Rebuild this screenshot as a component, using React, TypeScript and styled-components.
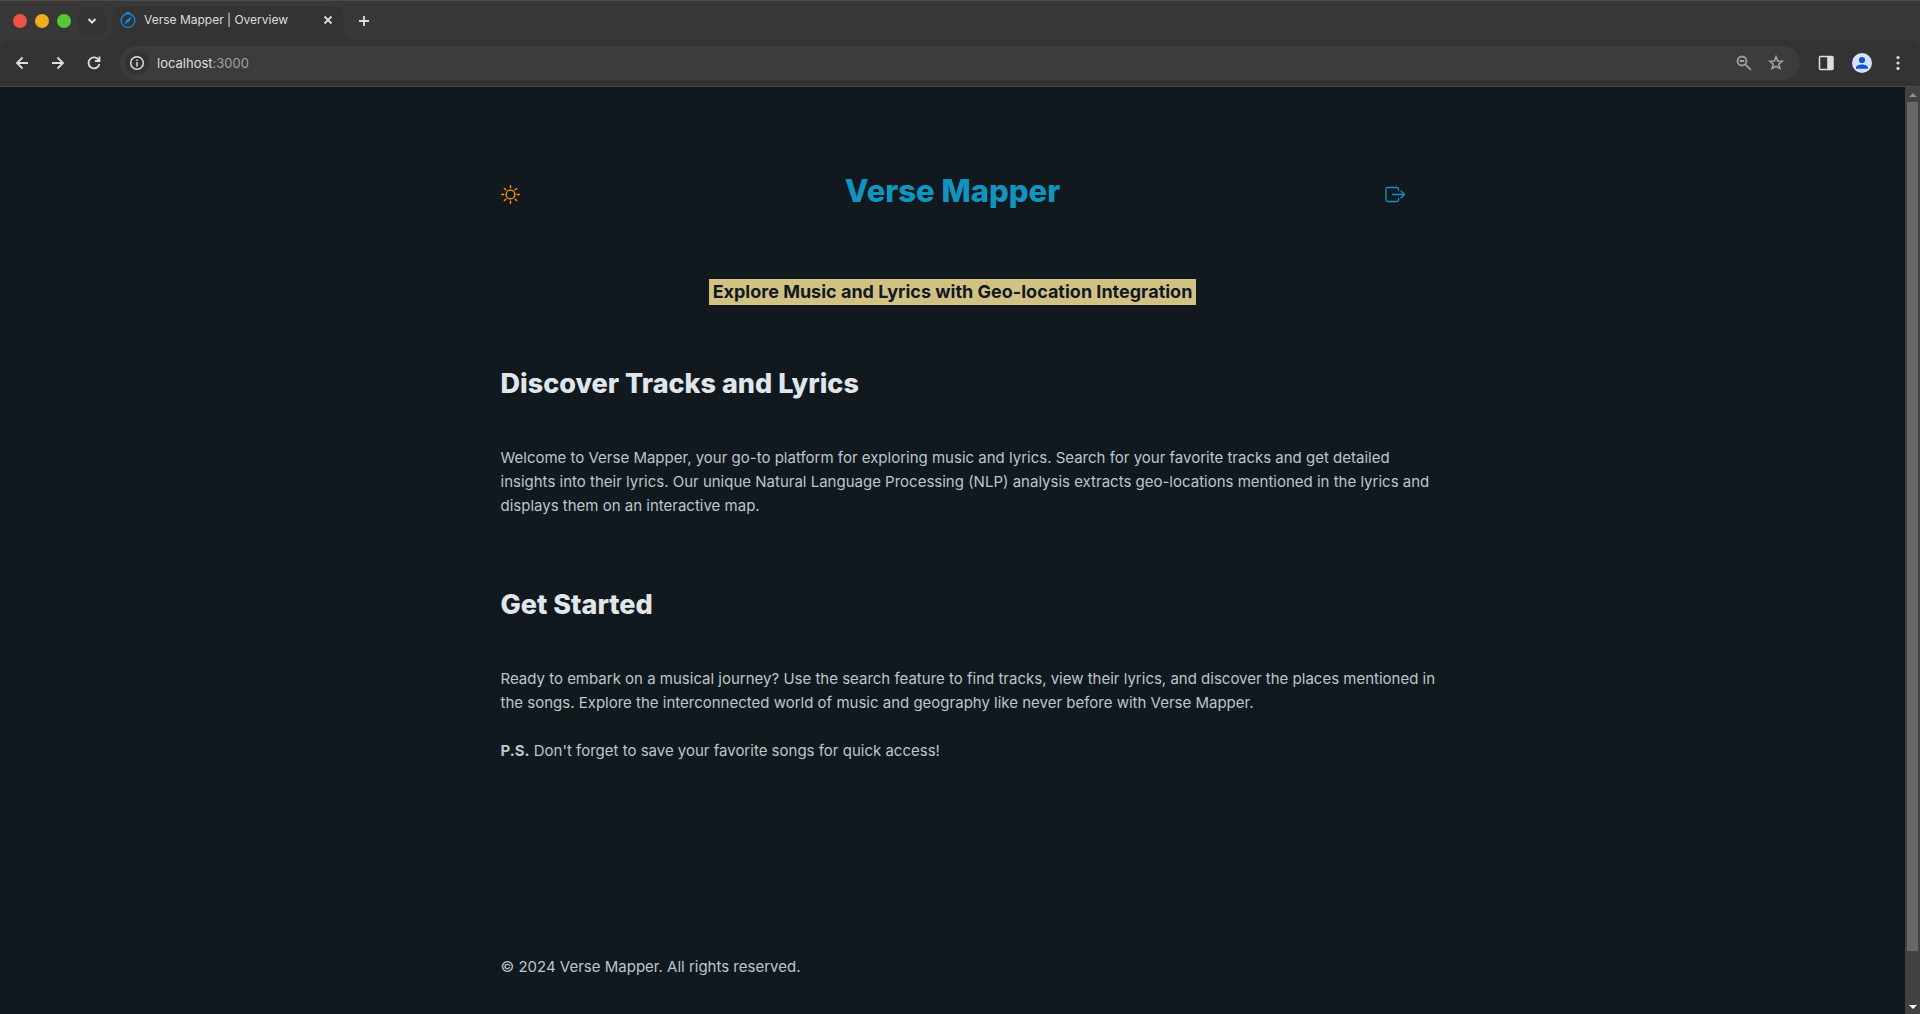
import React from "react";
import styled, { createGlobalStyle } from "styled-components";

const GlobalStyle = createGlobalStyle`
  *, *::before, *::after { box-sizing: border-box; }
  html { background: #11191f; }
  body {
    margin: 0;
    font-family: Inter, "Liberation Sans", sans-serif;
    color: #bbc6ce;
    overflow: hidden;
  }
  button { padding: 0; border: 0; background: none; color: inherit; font: inherit; }
  svg { display: block; }
`;

const Window = styled.div`
  height: 100vh;
  display: flex;
  flex-direction: column;
`;

const TabStrip = styled.div`
  height: 40px;
  flex: none;
  display: flex;
  align-items: center;
  padding: 0 13px;
  background: #383838;
  border-top: 1px solid #4b4b4b;
`;

const Lights = styled.div`
  display: flex;
  gap: 8px;
  margin-right: 7px;
`;

const Light = styled.button<{ $color: string }>`
  width: 14px;
  height: 14px;
  border-radius: 50%;
  background: ${(p) => p.$color};
`;

const IconButton = styled.button<{ $size?: number; $color?: string; $fill?: string }>`
  width: ${(p) => p.$size ?? 36}px;
  height: ${(p) => p.$size ?? 36}px;
  flex: none;
  display: flex;
  align-items: center;
  justify-content: center;
  border-radius: 10px;
  color: ${(p) => p.$color ?? "#dedede"};
  background: ${(p) => p.$fill ?? "transparent"};
`;

const Tab = styled.div`
  position: relative;
  width: 232px;
  height: 34px;
  align-self: flex-end;
  display: flex;
  align-items: center;
  gap: 8px;
  margin: 0 2px 0 6px;
  padding: 0 6px 6px 8px;
  border-radius: 10px 10px 0 0;
  background: #333333;

  &::before,
  &::after {
    content: "";
    position: absolute;
    bottom: 0;
    width: 10px;
    height: 10px;
  }
  &::before {
    right: 100%;
    background: radial-gradient(circle at 0 0, transparent 10px, #333333 10px);
  }
  &::after {
    left: 100%;
    background: radial-gradient(circle at 100% 0, transparent 10px, #333333 10px);
  }
`;

const TabTitle = styled.span`
  flex: 1;
  font-size: 12px;
  line-height: 16px;
  color: #dedede;
  white-space: nowrap;
`;

const Toolbar = styled.div`
  height: 47px;
  display: flex;
  align-items: center;
  padding: 0 4px;
  background: #333333;
  border-radius: 10px 10px 0 0;
  border-bottom: 1px solid #484848;
`;

const ToolbarWrap = styled.div`
  flex: none;
  background: #383838;
`;

const AddressBar = styled.div`
  flex: 1;
  height: 34px;
  display: flex;
  align-items: center;
  margin: 0 8px;
  padding: 0 8px 0 5px;
  border-radius: 17px;
  background: #3c3c3c;
`;

const InfoButton = styled(IconButton)`
  border-radius: 50%;
`;

const Address = styled.span`
  flex: 1;
  margin-left: 8px;
  font-size: 13px;
  line-height: 20px;
  color: #dedede;
`;

const Port = styled.span`
  color: #a0a0a0;
`;

const Viewport = styled.div`
  flex: 1;
  min-height: 0;
  display: flex;
  background: #11191f;
`;

const Page = styled.div`
  flex: 1;
  min-width: 0;
  overflow: hidden;
`;

const Container = styled.div`
  max-width: 904px;
  margin: 0 auto;
`;

const Header = styled.header`
  display: flex;
  align-items: center;
  justify-content: space-between;
  padding-top: 84px;
`;

const Title = styled.h1`
  margin: 0;
  font-size: 31px;
  line-height: 40px;
  font-weight: 800;
  color: #1095c1;
`;

const HeaderButton = styled.button<{ $color: string }>`
  display: flex;
  padding-top: 6px;
  color: ${(p) => p.$color};
`;

const Tagline = styled.p`
  margin: 68px 0 16px;
  text-align: center;
  font-size: 18px;
  line-height: 26px;
  font-weight: 700;
`;

const Mark = styled.mark`
  display: inline-block;
  padding: 0 4px;
  background: #d1c284;
  color: #11191f;
`;

const Section = styled.section`
  padding-top: 45px;
`;

const Heading = styled.h2`
  margin: 0 0 44px;
  font-size: 27px;
  line-height: 36px;
  font-weight: 800;
  color: #e1e6eb;
`;

const Text = styled.p`
  margin: 0 -32px 24px 0;
  font-size: 15px;
  line-height: 24px;
`;

const Footer = styled.footer`
  padding-top: 168px;
  font-size: 15px;
  line-height: 24px;
`;

const ScrollTrack = styled.div`
  width: 15px;
  flex: none;
  display: flex;
  flex-direction: column;
  align-items: center;
  background: #424242;
`;

const ScrollArrow = styled.button<{ $color: string }>`
  height: 15px;
  width: 15px;
  flex: none;
  display: flex;
  align-items: center;
  justify-content: center;
  color: ${(p) => p.$color};
`;

const ScrollRail = styled.div`
  flex: 1;
  width: 11px;
`;

const ScrollThumb = styled.div`
  height: 94.6%;
  background: #686868;
`;

type GlyphProps = { d: string; size?: number; width?: number };

const Glyph = ({ d, size = 16, width = 2 }: GlyphProps) => (
  <svg width={size} height={size} viewBox="0 0 16 16" fill="none" stroke="currentColor" strokeWidth={width}>
    <path d={d} />
  </svg>
);

const Compass = () => (
  <svg width="16" height="16" viewBox="0 0 16 16" fill="none" stroke="#0a94f5">
    <circle cx="8" cy="8.5" r="6.9" strokeWidth="1.2" />
    <path d="M6 1h4" strokeWidth="1.6" />
    <path d="M12 4.5 9 9.5 4 12.5 7 7.5z" fill="#0a94f5" stroke="none" />
  </svg>
);

const Info = () => (
  <svg width="16" height="16" viewBox="0 0 16 16" fill="none" stroke="currentColor">
    <circle cx="8" cy="8" r="6.3" strokeWidth="1.5" />
    <path d="M8 7v4.4M8 4.4v1.5" strokeWidth="1.5" />
  </svg>
);

const ZoomOut = () => (
  <svg width="16" height="16" viewBox="0 0 16 16" fill="none" stroke="currentColor" strokeWidth="1.8">
    <circle cx="6" cy="6" r="4.5" />
    <path d="m9.300 9.300 5.500 5.500M3.800 6h4.400" />
  </svg>
);

const SidePanel = () => (
  <svg width="16" height="16" viewBox="0 0 16 16" fill="none" stroke="currentColor">
    <rect x="1.500" y="1.500" width="13.500" height="13" rx="1" strokeWidth="1.500" />
    <path d="M9.200 1.500H15v13H9.200z" fill="currentColor" stroke="none" />
  </svg>
);

const Avatar = () => (
  <svg width="20" height="20" viewBox="0 0 20 20">
    <circle cx="10" cy="10" r="10" fill="#d3e3fd" />
    <circle cx="10" cy="7" r="3.1" fill="#0b57d0" />
    <path d="M4 15.8v-1.4c0-2 3.6-3 6-3s6 1 6 3v1.4z" fill="#0b57d0" />
  </svg>
);

const Dots = () => (
  <svg width="16" height="16" viewBox="0 0 16 16" fill="currentColor">
    <circle cx="8" cy="2.6" r="1.6" />
    <circle cx="8" cy="8" r="1.6" />
    <circle cx="8" cy="13.4" r="1.6" />
  </svg>
);

const Sun = () => (
  <svg width="20" height="20" viewBox="0 0 20 20" fill="none" stroke="currentColor" strokeWidth="1.4" strokeLinecap="round">
    <circle cx="9.500" cy="10.500" r="4.400" />
    <path d="M9.500 1.700v2M9.500 17.300v2M.7 10.500h2M16.300 10.500h2M3.400 4.400l1.400 1.400M14.200 15.200l1.400 1.400M3.400 16.600l1.400-1.400M14.200 5.800l1.400-1.400" />
  </svg>
);

const Exit = () => (
  <svg width="20" height="20" viewBox="0 0 20 20" fill="none" stroke="currentColor" strokeWidth="1.3" strokeLinecap="round" strokeLinejoin="round">
    <path d="M13.500 6.500V5c0-.9-.5-1.500-1.400-1.500H2.500C1.600 3.500 1 4.100 1 5v11c0 .9.6 1.500 1.500 1.500h9.600c.9 0 1.400-.6 1.400-1.500v-1.500" />
    <path d="M7.500 10.500h12M16 7l3.500 3.500L16 14" />
  </svg>
);

export default function App() {
  return (
    <>
      <GlobalStyle />
      <Window>
        <TabStrip>
          <Lights>
            <Light $color="#ec5249" aria-label="Close window" />
            <Light $color="#f1ae1b" aria-label="Minimize window" />
            <Light $color="#58c837" aria-label="Zoom window" />
          </Lights>
          <IconButton $size={28} $fill="#333333" aria-label="Search tabs">
            <Glyph d="m4.500 6 3.500 3.500L11.500 6" />
          </IconButton>
          <Tab>
            <Compass />
            <TabTitle>Verse Mapper | Overview</TabTitle>
            <IconButton $size={20} aria-label="Close tab">
              <Glyph d="m4.500 4.500 7 7m0-7-7 7" width={1.8} />
            </IconButton>
          </Tab>
          <IconButton aria-label="New tab">
            <Glyph d="M8 3v10M3 8h10" width={1.8} />
          </IconButton>
        </TabStrip>
        <ToolbarWrap>
          <Toolbar>
            <IconButton aria-label="Back">
              <Glyph d="M14 8H3m5.500-5.500L3 8l5.500 5.500" width={1.8} />
            </IconButton>
            <IconButton aria-label="Forward">
              <Glyph d="M2 8h11M7.500 2.500 13 8l-5.500 5.500" width={1.8} />
            </IconButton>
            <IconButton aria-label="Reload">
              <Glyph d="M12.800 5.200A5.500 5.500 0 1 0 13.400 9M13.500 1.500V6H9" width={1.8} />
            </IconButton>
            <AddressBar>
              <InfoButton $size={24} $fill="#333333" aria-label="Site information">
                <Info />
              </InfoButton>
              <Address>
                localhost<Port>:3000</Port>
              </Address>
              <IconButton $size={32} $color="#a0a0a0" aria-label="Zoom level">
                <ZoomOut />
              </IconButton>
              <IconButton $size={32} $color="#a0a0a0" aria-label="Bookmark this page">
                <Glyph
                  d="m8 1.800 1.700 4.200 4.500.3-3.500 2.900 1.200 4.400L8 11.200l-3.900 2.400 1.200-4.400-3.500-2.900 4.500-.3z"
                  width={1.6}
                />
              </IconButton>
            </AddressBar>
            <IconButton aria-label="Side panel">
              <SidePanel />
            </IconButton>
            <IconButton aria-label="Profile">
              <Avatar />
            </IconButton>
            <IconButton aria-label="Menu">
              <Dots />
            </IconButton>
          </Toolbar>
        </ToolbarWrap>
        <Viewport>
          <Page>
            <Container>
              <Header>
                <HeaderButton $color="#ff9500" aria-label="Toggle theme">
                  <Sun />
                </HeaderButton>
                <Title>Verse Mapper</Title>
                <HeaderButton $color="#1095c1" aria-label="Log in">
                  <Exit />
                </HeaderButton>
              </Header>
              <main>
                <Tagline>
                  <Mark>Explore Music and Lyrics with Geo-location Integration</Mark>
                </Tagline>
                <Section>
                  <Heading>Discover Tracks and Lyrics</Heading>
                  <Text>
                    Welcome to Verse Mapper, your go-to platform for exploring music and lyrics. Search for your
                    favorite tracks and get detailed insights into their lyrics. Our unique Natural Language
                    Processing (NLP) analysis extracts geo-locations mentioned in the lyrics and displays them on an
                    interactive map.
                  </Text>
                </Section>
                <Section>
                  <Heading>Get Started</Heading>
                  <Text>
                    Ready to embark on a musical journey? Use the search feature to find tracks, view their lyrics,
                    and discover the places mentioned in the songs. Explore the interconnected world of music and
                    geography like never before with Verse Mapper.
                  </Text>
                  <Text>
                    <strong>P.S.</strong> Don't forget to save your favorite songs for quick access!
                  </Text>
                </Section>
              </main>
              <Footer>© 2024 Verse Mapper. All rights reserved.</Footer>
            </Container>
          </Page>
          <ScrollTrack>
            <ScrollArrow $color="#8c8c8c" aria-label="Scroll up">
              <svg width="8" height="4" viewBox="0 0 8 4" fill="currentColor">
                <path d="M0 4 4 0l4 4z" />
              </svg>
            </ScrollArrow>
            <ScrollRail>
              <ScrollThumb />
            </ScrollRail>
            <ScrollArrow $color="#ffffff" aria-label="Scroll down">
              <svg width="8" height="4" viewBox="0 0 8 4" fill="currentColor">
                <path d="M0 0h8L4 4z" />
              </svg>
            </ScrollArrow>
          </ScrollTrack>
        </Viewport>
      </Window>
    </>
  );
}
